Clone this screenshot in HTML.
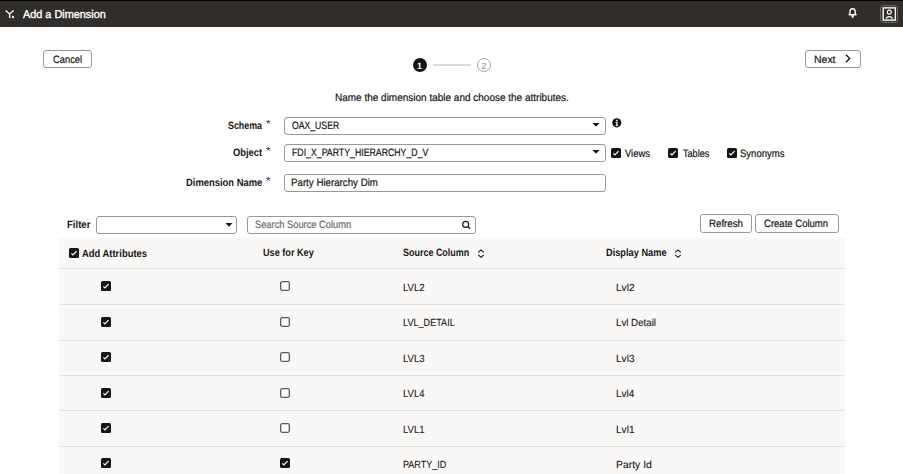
<!DOCTYPE html>
<html><head><meta charset="utf-8">
<style>
html,body{margin:0;padding:0;width:903px;height:474px;overflow:hidden;background:#fff;}
body{position:relative;font-family:"Liberation Sans",sans-serif;}
.t{position:absolute;white-space:nowrap;transform-origin:0 0;text-rendering:geometricPrecision;}
.ic{position:absolute;line-height:0;}
.ic svg{display:block;}
.bx{position:absolute;box-sizing:border-box;border:1px solid #999794;border-radius:3px;background:#fff;}
.rb{position:absolute;left:59px;width:786px;height:1px;background:#e4e2df;}
</style></head><body>
<div style="position:absolute;left:0;top:0;width:903px;height:1px;background:#000"></div>
<div style="position:absolute;left:0;top:1px;width:903px;height:26px;background:#312d2a"></div>
<div class="ic" style="left:5px;top:10px"><svg width="10" height="9" viewBox="0 0 10 9"><path d="M0.6 0.6 L4.6 3.9 L8.6 0.6 M4.6 3.9 L4.6 7.9" stroke="#fff" stroke-width="1.35" fill="none"/><circle cx="7.9" cy="6.9" r="1.25" fill="#fff"/></svg></div>
<div class="ic" style="left:848px;top:8px"><svg width="10" height="10" viewBox="0 0 10 10"><path d="M1.9 6.2 L1.9 4.3 C1.9 2 3.2 0.75 4.6 0.75 C6 0.75 7.3 2 7.3 4.3 L7.3 6.2" stroke="#fff" stroke-width="1.4" fill="none"/><path d="M0.2 6.1 L9 6.1 L8.2 7.4 L1 7.4 Z" fill="#fff"/><path d="M3.3 7.3 L6 7.3 L5.4 9.7 L3.9 9.7 Z" fill="#fff"/></svg></div>
<div style="position:absolute;left:880px;top:5px;width:18px;height:18px;box-sizing:border-box;border-radius:3px;background:#3a3633;border:1px solid #66625e"></div>
<div class="ic" style="left:882px;top:7px"><svg width="14" height="14" viewBox="0 0 14 14"><rect x="1.2" y="0.9" width="12.2" height="12.2" fill="#312d2a" stroke="#fff" stroke-width="1.4"/><circle cx="7.3" cy="5.2" r="2" stroke="#fff" stroke-width="1.2" fill="none"/><path d="M4.2 11.6 C4.8 8.9 9.8 8.9 10.4 11.6" stroke="#fff" stroke-width="1.3" fill="none"/></svg></div>

<div class="bx" style="left:43px;top:50px;width:49px;height:18px;"></div>
<div class="bx" style="left:805px;top:50px;width:56px;height:18px;"></div>
<div class="ic" style="left:845px;top:54px"><svg width="6" height="9" viewBox="0 0 6 9"><path d="M1 0.8 L4.6 4.5 L1 8.2" stroke="#161513" stroke-width="1.4" fill="none"/></svg></div>

<div style="position:absolute;left:412.5px;top:58px;width:14px;height:14px;border-radius:50%;background:#161513"></div>
<div class="t" style="left:417px;top:59.5px;font-size:9px;line-height:12px;font-weight:bold;color:#fff">1</div>
<div style="position:absolute;left:433px;top:64px;width:38px;height:2px;background:#dcdad7"></div>
<div style="position:absolute;left:477px;top:58px;width:14px;height:14px;box-sizing:border-box;border:1px solid #a9a6a3;border-radius:50%;background:#fff"></div>
<div class="t" style="left:481.5px;top:59.5px;font-size:9px;line-height:12px;color:#8e8b88">2</div>

<div class="bx" style="left:284px;top:117px;width:322px;height:18px;"></div>
<div class="bx" style="left:284px;top:144px;width:322px;height:18px;"></div>
<div class="bx" style="left:284px;top:174px;width:322px;height:18px;"></div>
<div class="ic" style="left:592px;top:123px"><svg width="8" height="4" viewBox="0 0 8 4"><path d="M0.5 0.1 L7.5 0.1 L4 3.7 Z" fill="#161513"/></svg></div>
<div class="ic" style="left:592px;top:150px"><svg width="8" height="4" viewBox="0 0 8 4"><path d="M0.5 0.1 L7.5 0.1 L4 3.7 Z" fill="#161513"/></svg></div>
<div class="ic" style="left:266px;top:120px"><svg width="5" height="5" viewBox="0 0 5 5"><path d="M2.3 1.9 L2.3 0.1 M2.3 1.9 L4.05 1.35 M2.3 1.9 L0.55 1.35 M2.3 1.9 L3.38 3.4 M2.3 1.9 L1.22 3.4" stroke="#3f4e5e" stroke-width="0.9" stroke-linecap="round"/></svg></div>
<div class="ic" style="left:266px;top:147px"><svg width="5" height="5" viewBox="0 0 5 5"><path d="M2.3 1.9 L2.3 0.1 M2.3 1.9 L4.05 1.35 M2.3 1.9 L0.55 1.35 M2.3 1.9 L3.38 3.4 M2.3 1.9 L1.22 3.4" stroke="#3f4e5e" stroke-width="0.9" stroke-linecap="round"/></svg></div>
<div class="ic" style="left:266px;top:177px"><svg width="5" height="5" viewBox="0 0 5 5"><path d="M2.3 1.9 L2.3 0.1 M2.3 1.9 L4.05 1.35 M2.3 1.9 L0.55 1.35 M2.3 1.9 L3.38 3.4 M2.3 1.9 L1.22 3.4" stroke="#3f4e5e" stroke-width="0.9" stroke-linecap="round"/></svg></div>
<div class="ic" style="left:612px;top:118px"><svg width="10" height="10" viewBox="0 0 10 10"><circle cx="4.8" cy="4.8" r="4.6" fill="#161513"/><path d="M3.6 4.1 L5.5 4.1 L5.5 7.2 L6.1 7.2 L6.1 7.9 L3.6 7.9 L3.6 7.2 L4.3 7.2 L4.3 4.8 L3.6 4.8 Z" fill="#fff"/><circle cx="4.9" cy="2.6" r="0.85" fill="#fff"/></svg></div>
<div class="ic" style="left:611px;top:148px"><svg width="10" height="10" viewBox="0 0 10 10"><rect x="0" y="0" width="10" height="10" rx="1.5" fill="#161513"/><path d="M2.4 5.3 L3.9 6.9 L7.6 3.1" stroke="#fff" stroke-width="1.2" fill="none"/></svg></div>
<div class="ic" style="left:668px;top:148px"><svg width="10" height="10" viewBox="0 0 10 10"><rect x="0" y="0" width="10" height="10" rx="1.5" fill="#161513"/><path d="M2.4 5.3 L3.9 6.9 L7.6 3.1" stroke="#fff" stroke-width="1.2" fill="none"/></svg></div>
<div class="ic" style="left:727px;top:148px"><svg width="10" height="10" viewBox="0 0 10 10"><rect x="0" y="0" width="10" height="10" rx="1.5" fill="#161513"/><path d="M2.4 5.3 L3.9 6.9 L7.6 3.1" stroke="#fff" stroke-width="1.2" fill="none"/></svg></div>

<div class="bx" style="left:96px;top:216px;width:141px;height:18px;"></div>
<div class="ic" style="left:225px;top:223px"><svg width="8" height="4" viewBox="0 0 8 4"><path d="M0.5 0.1 L7.5 0.1 L4 3.7 Z" fill="#161513"/></svg></div>
<div class="bx" style="left:247px;top:216px;width:229px;height:18px;"></div>
<div class="ic" style="left:461px;top:220px"><svg width="10" height="10" viewBox="0 0 10 10"><circle cx="4.7" cy="4.4" r="3" stroke="#161513" stroke-width="1.15" fill="none"/><path d="M6.9 6.7 L9.2 8.8" stroke="#161513" stroke-width="1.2"/></svg></div>
<div class="bx" style="left:700px;top:214px;width:52px;height:19px;"></div>
<div class="bx" style="left:755px;top:214px;width:84px;height:19px;"></div>

<div style="position:absolute;left:59px;top:238px;width:786px;height:236px;background:#f9f8f7"></div>
<div class="ic" style="left:69px;top:248px"><svg width="10" height="10" viewBox="0 0 10 10"><rect x="0" y="0" width="10" height="10" rx="1.5" fill="#161513"/><path d="M2.4 5.3 L3.9 6.9 L7.6 3.1" stroke="#fff" stroke-width="1.2" fill="none"/></svg></div>
<div class="ic" style="left:477px;top:249px"><svg width="8" height="10" viewBox="0 0 8 10"><path d="M1.2 3.4 L4 0.9 L6.8 3.4 M1.2 5.8 L4 8.3 L6.8 5.8" stroke="#161513" stroke-width="1.1" fill="none"/></svg></div>
<div class="ic" style="left:674px;top:249px"><svg width="8" height="10" viewBox="0 0 8 10"><path d="M1.2 3.4 L4 0.9 L6.8 3.4 M1.2 5.8 L4 8.3 L6.8 5.8" stroke="#161513" stroke-width="1.1" fill="none"/></svg></div>
<div class="rb" style="top:268px"></div><div class="ic" style="left:101px;top:281px"><svg width="10" height="10" viewBox="0 0 10 10"><rect x="0" y="0" width="10" height="10" rx="1.5" fill="#161513"/><path d="M2.4 5.3 L3.9 6.9 L7.6 3.1" stroke="#fff" stroke-width="1.2" fill="none"/></svg></div><div class="ic" style="left:280px;top:281px"><svg width="10" height="10" viewBox="0 0 10 10"><rect x="0.65" y="0.65" width="8.7" height="8.7" rx="1.5" fill="#fff" stroke="#5a5754" stroke-width="1.3"/></svg></div><div class="rb" style="top:304px"></div><div class="ic" style="left:101px;top:317px"><svg width="10" height="10" viewBox="0 0 10 10"><rect x="0" y="0" width="10" height="10" rx="1.5" fill="#161513"/><path d="M2.4 5.3 L3.9 6.9 L7.6 3.1" stroke="#fff" stroke-width="1.2" fill="none"/></svg></div><div class="ic" style="left:280px;top:317px"><svg width="10" height="10" viewBox="0 0 10 10"><rect x="0.65" y="0.65" width="8.7" height="8.7" rx="1.5" fill="#fff" stroke="#5a5754" stroke-width="1.3"/></svg></div><div class="rb" style="top:340px"></div><div class="ic" style="left:101px;top:352px"><svg width="10" height="10" viewBox="0 0 10 10"><rect x="0" y="0" width="10" height="10" rx="1.5" fill="#161513"/><path d="M2.4 5.3 L3.9 6.9 L7.6 3.1" stroke="#fff" stroke-width="1.2" fill="none"/></svg></div><div class="ic" style="left:280px;top:352px"><svg width="10" height="10" viewBox="0 0 10 10"><rect x="0.65" y="0.65" width="8.7" height="8.7" rx="1.5" fill="#fff" stroke="#5a5754" stroke-width="1.3"/></svg></div><div class="rb" style="top:375px"></div><div class="ic" style="left:101px;top:388px"><svg width="10" height="10" viewBox="0 0 10 10"><rect x="0" y="0" width="10" height="10" rx="1.5" fill="#161513"/><path d="M2.4 5.3 L3.9 6.9 L7.6 3.1" stroke="#fff" stroke-width="1.2" fill="none"/></svg></div><div class="ic" style="left:280px;top:388px"><svg width="10" height="10" viewBox="0 0 10 10"><rect x="0.65" y="0.65" width="8.7" height="8.7" rx="1.5" fill="#fff" stroke="#5a5754" stroke-width="1.3"/></svg></div><div class="rb" style="top:410px"></div><div class="ic" style="left:101px;top:423px"><svg width="10" height="10" viewBox="0 0 10 10"><rect x="0" y="0" width="10" height="10" rx="1.5" fill="#161513"/><path d="M2.4 5.3 L3.9 6.9 L7.6 3.1" stroke="#fff" stroke-width="1.2" fill="none"/></svg></div><div class="ic" style="left:280px;top:423px"><svg width="10" height="10" viewBox="0 0 10 10"><rect x="0.65" y="0.65" width="8.7" height="8.7" rx="1.5" fill="#fff" stroke="#5a5754" stroke-width="1.3"/></svg></div><div class="rb" style="top:446px"></div><div class="ic" style="left:101px;top:458px"><svg width="10" height="10" viewBox="0 0 10 10"><rect x="0" y="0" width="10" height="10" rx="1.5" fill="#161513"/><path d="M2.4 5.3 L3.9 6.9 L7.6 3.1" stroke="#fff" stroke-width="1.2" fill="none"/></svg></div><div class="ic" style="left:280px;top:458px"><svg width="10" height="10" viewBox="0 0 10 10"><rect x="0" y="0" width="10" height="10" rx="1.5" fill="#161513"/><path d="M2.4 5.3 L3.9 6.9 L7.6 3.1" stroke="#fff" stroke-width="1.2" fill="none"/></svg></div>
<div class="t" style="left:23.00px;top:10.00px;font-size:11.3px;line-height:11.3px;font-weight:normal;color:#fff;transform:scaleX(0.9619);-webkit-text-stroke:0.35px #fff;">Add a Dimension</div>
<div class="t" style="left:52.56px;top:55.00px;font-size:10.6px;line-height:10.6px;font-weight:normal;color:#161513;transform:scaleX(0.8819);-webkit-text-stroke:0.2px currentColor;">Cancel</div>
<div class="t" style="left:813.51px;top:55.00px;font-size:10.6px;line-height:10.6px;font-weight:normal;color:#161513;transform:scaleX(0.9880);-webkit-text-stroke:0.2px currentColor;">Next</div>
<div class="t" style="left:335.06px;top:93.00px;font-size:10.6px;line-height:10.6px;font-weight:normal;color:#161513;transform:scaleX(0.9431);-webkit-text-stroke:0.2px currentColor;">Name the dimension table and choose the attributes.</div>
<div class="t" style="left:227.78px;top:121.00px;font-size:10.6px;line-height:10.6px;font-weight:bold;color:#161513;transform:scaleX(0.8373);">Schema</div>
<div class="t" style="left:233.06px;top:148.00px;font-size:10.6px;line-height:10.6px;font-weight:bold;color:#161513;transform:scaleX(0.8806);">Object</div>
<div class="t" style="left:186.03px;top:178.00px;font-size:10.6px;line-height:10.6px;font-weight:bold;color:#161513;transform:scaleX(0.8873);">Dimension Name</div>
<div class="t" style="left:291.99px;top:121.00px;font-size:10.6px;line-height:10.6px;font-weight:normal;color:#161513;transform:scaleX(0.8176);-webkit-text-stroke:0.2px currentColor;">OAX_USER</div>
<div class="t" style="left:291.57px;top:148.00px;font-size:10.6px;line-height:10.6px;font-weight:normal;color:#161513;transform:scaleX(0.8262);-webkit-text-stroke:0.2px currentColor;">FDI_X_PARTY_HIERARCHY_D_V</div>
<div class="t" style="left:291.48px;top:178.00px;font-size:10.6px;line-height:10.6px;font-weight:normal;color:#161513;transform:scaleX(0.9172);-webkit-text-stroke:0.2px currentColor;">Party Hierarchy Dim</div>
<div class="t" style="left:625.18px;top:149.00px;font-size:10.6px;line-height:10.6px;font-weight:normal;color:#161513;transform:scaleX(0.8873);-webkit-text-stroke:0.2px currentColor;">Views</div>
<div class="t" style="left:682.59px;top:149.00px;font-size:10.6px;line-height:10.6px;font-weight:normal;color:#161513;transform:scaleX(0.8567);-webkit-text-stroke:0.2px currentColor;">Tables</div>
<div class="t" style="left:740.25px;top:149.00px;font-size:10.6px;line-height:10.6px;font-weight:normal;color:#161513;transform:scaleX(0.8990);-webkit-text-stroke:0.2px currentColor;">Synonyms</div>
<div class="t" style="left:66.52px;top:220.00px;font-size:10.6px;line-height:10.6px;font-weight:bold;color:#161513;transform:scaleX(0.9040);">Filter</div>
<div class="t" style="left:254.76px;top:220.00px;font-size:10.6px;line-height:10.6px;font-weight:normal;color:#6f6c69;transform:scaleX(0.8776);-webkit-text-stroke:0.2px currentColor;">Search Source Column</div>
<div class="t" style="left:708.88px;top:219.00px;font-size:10.6px;line-height:10.6px;font-weight:normal;color:#161513;transform:scaleX(0.9155);-webkit-text-stroke:0.2px currentColor;">Refresh</div>
<div class="t" style="left:764.35px;top:219.00px;font-size:10.6px;line-height:10.6px;font-weight:normal;color:#161513;transform:scaleX(0.9000);-webkit-text-stroke:0.2px currentColor;">Create Column</div>
<div class="t" style="left:82.38px;top:249.00px;font-size:10.6px;line-height:10.6px;font-weight:bold;color:#161513;transform:scaleX(0.8883);">Add Attributes</div>
<div class="t" style="left:263.25px;top:248.00px;font-size:10.6px;line-height:10.6px;font-weight:bold;color:#161513;transform:scaleX(0.8621);">Use for Key</div>
<div class="t" style="left:403.28px;top:248.00px;font-size:10.6px;line-height:10.6px;font-weight:bold;color:#161513;transform:scaleX(0.8466);">Source Column</div>
<div class="t" style="left:606.35px;top:248.00px;font-size:10.6px;line-height:10.6px;font-weight:bold;color:#161513;transform:scaleX(0.8718);">Display Name</div>
<div class="t" style="left:403.00px;top:284.00px;font-size:10.3px;line-height:10.3px;font-weight:normal;color:#161513;transform:scaleX(0.9318);-webkit-text-stroke:0.1px currentColor;">LVL2</div>
<div class="t" style="left:616.06px;top:284.00px;font-size:10.3px;line-height:10.3px;font-weight:normal;color:#161513;transform:scaleX(0.9803);-webkit-text-stroke:0.1px currentColor;">Lvl2</div>
<div class="t" style="left:403.04px;top:319.00px;font-size:10.3px;line-height:10.3px;font-weight:normal;color:#161513;transform:scaleX(0.8835);-webkit-text-stroke:0.1px currentColor;">LVL_DETAIL</div>
<div class="t" style="left:616.09px;top:319.00px;font-size:10.3px;line-height:10.3px;font-weight:normal;color:#161513;transform:scaleX(0.9439);-webkit-text-stroke:0.1px currentColor;">Lvl Detail</div>
<div class="t" style="left:403.00px;top:355.00px;font-size:10.3px;line-height:10.3px;font-weight:normal;color:#161513;transform:scaleX(0.9318);-webkit-text-stroke:0.1px currentColor;">LVL3</div>
<div class="t" style="left:616.06px;top:355.00px;font-size:10.3px;line-height:10.3px;font-weight:normal;color:#161513;transform:scaleX(0.9803);-webkit-text-stroke:0.1px currentColor;">Lvl3</div>
<div class="t" style="left:403.01px;top:390.00px;font-size:10.3px;line-height:10.3px;font-weight:normal;color:#161513;transform:scaleX(0.9213);-webkit-text-stroke:0.1px currentColor;">LVL4</div>
<div class="t" style="left:616.07px;top:390.00px;font-size:10.3px;line-height:10.3px;font-weight:normal;color:#161513;transform:scaleX(0.9667);-webkit-text-stroke:0.1px currentColor;">Lvl4</div>
<div class="t" style="left:403.00px;top:426.00px;font-size:10.3px;line-height:10.3px;font-weight:normal;color:#161513;transform:scaleX(0.9318);-webkit-text-stroke:0.1px currentColor;">LVL1</div>
<div class="t" style="left:616.06px;top:426.00px;font-size:10.3px;line-height:10.3px;font-weight:normal;color:#161513;transform:scaleX(0.9803);-webkit-text-stroke:0.1px currentColor;">Lvl1</div>
<div class="t" style="left:403.04px;top:461.00px;font-size:10.3px;line-height:10.3px;font-weight:normal;color:#161513;transform:scaleX(0.8746);-webkit-text-stroke:0.1px currentColor;">PARTY_ID</div>
<div class="t" style="left:616.04px;top:461.00px;font-size:10.3px;line-height:10.3px;font-weight:normal;color:#161513;transform:scaleX(1.0118);-webkit-text-stroke:0.1px currentColor;">Party Id</div>
</body></html>
